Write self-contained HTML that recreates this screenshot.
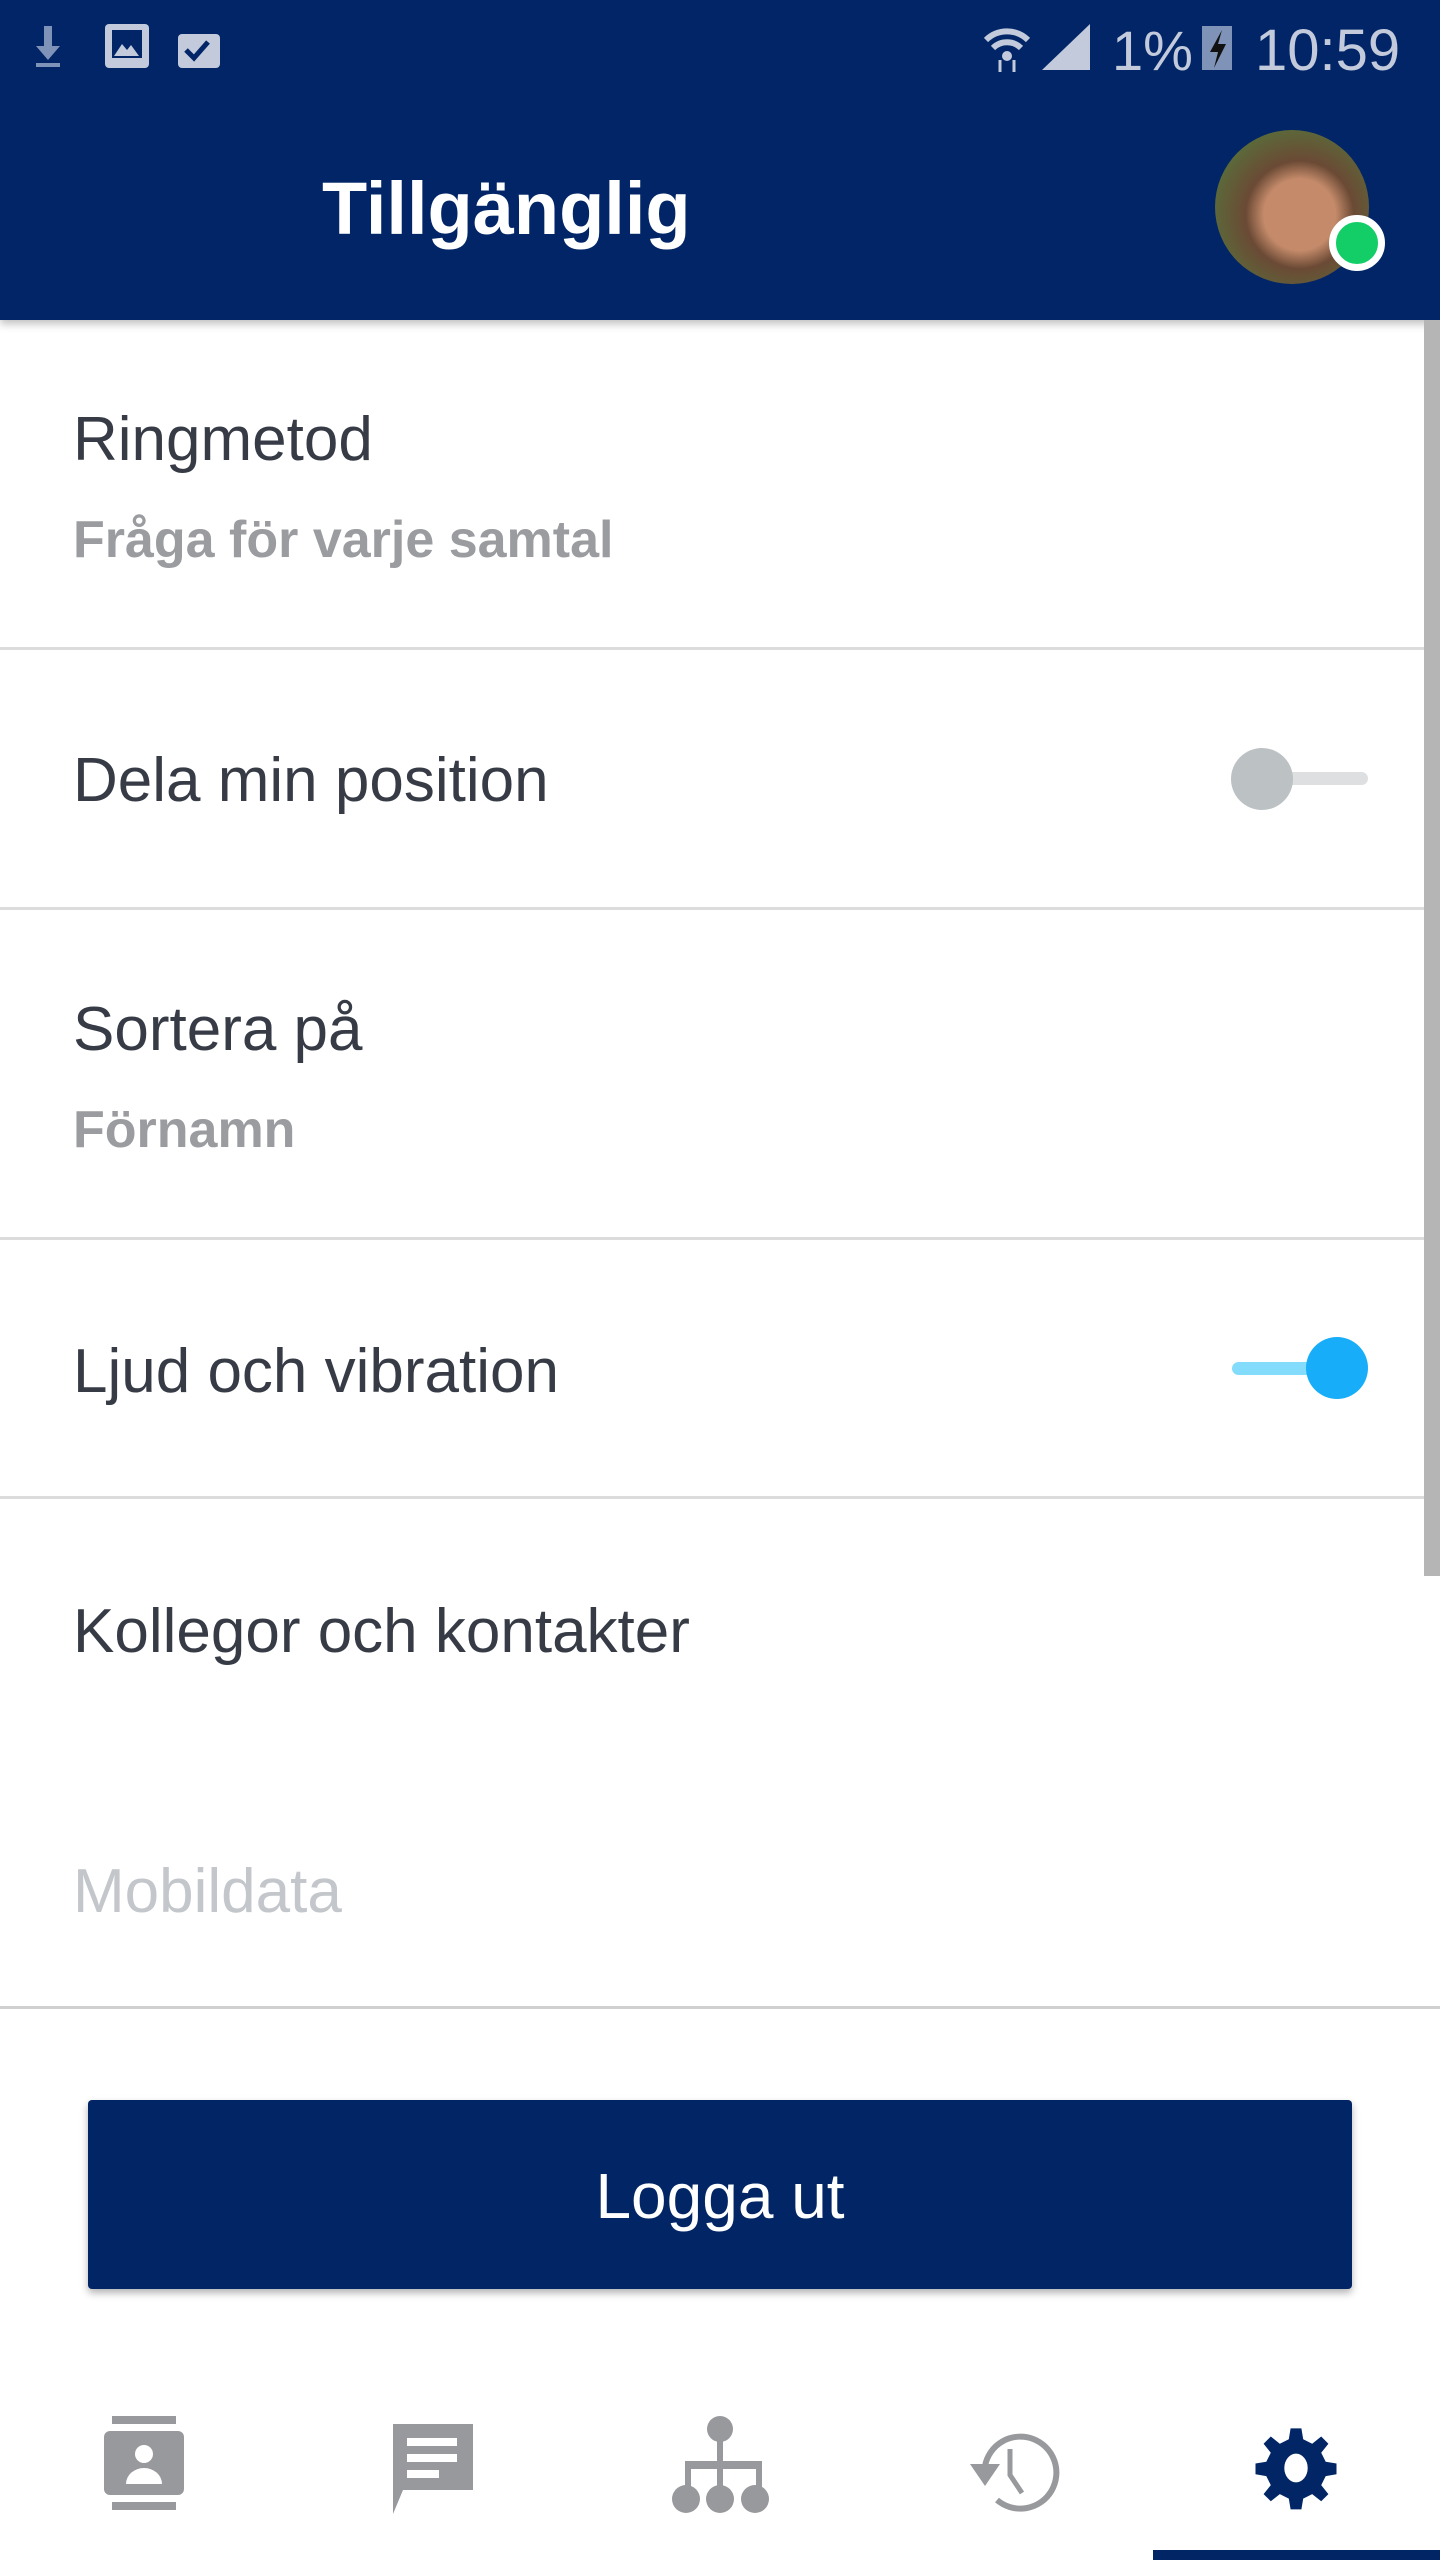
<!DOCTYPE html>
<html><head><meta charset="utf-8"><style>
*{margin:0;padding:0;box-sizing:border-box}
body{width:1440px;height:2560px;position:relative;background:#fff;font-family:"Liberation Sans",sans-serif;overflow:hidden}
.hdr{position:absolute;left:0;top:0;width:1440px;height:320px;background:#012566;box-shadow:0 4px 8px rgba(0,0,0,.25)}
.t{position:absolute;left:73px;font-size:62px;color:#363b45;white-space:nowrap}
.s{position:absolute;left:73px;font-size:52px;font-weight:bold;color:#9a9ca0;white-space:nowrap}
.d{position:absolute;left:0;width:1424px;height:3px;background:#dcdcdc}
</style></head><body>
<div class="hdr">
 <svg width="1440" height="100" style="position:absolute;left:0;top:0" fill="#c2cadc">
  <rect x="44" y="26" width="8" height="22" fill="#7f93b8"/><path d="M36 46h24l-12 14z" fill="#7f93b8"/><rect x="36" y="63" width="24" height="4" fill="#7f93b8"/>
  <rect x="105" y="24" width="44" height="44" rx="4"/><rect x="112" y="30" width="30" height="28" fill="#012566"/><path d="M114 56l8-12 5 6 4-5 8 11z"/>
  <rect x="178" y="34" width="42" height="34" rx="4"/><path d="M186 50l8 8 14-16" stroke="#012566" stroke-width="5" fill="none"/>
  <text x="1112" y="70" font-size="56" fill="#c2cadc" font-family="Liberation Sans">1%</text>
  <rect x="1202" y="26" width="30" height="44" fill="#7f93b8"/><path d="M1222 30l-12 22h8l-4 16 12-24h-8z" fill="#111"/>
  <text x="1255" y="70" font-size="58" fill="#c2cadc" font-family="Liberation Sans">10:59</text>
  <path d="M1042 70l48-46v46z"/>
  <path d="M986 40a30 30 0 0 1 42 0" stroke="#c2cadc" stroke-width="6" fill="none"/><path d="M993 48a20 20 0 0 1 28 0" stroke="#c2cadc" stroke-width="6" fill="none"/><circle cx="1007" cy="56" r="5"/><path d="M1000 60v12M1014 60v12" stroke="#c2cadc" stroke-width="3"/>
 </svg>
 <div style="position:absolute;left:322px;top:166px;font-size:74px;font-weight:bold;color:#fff">Tillgänglig</div>
 <div style="position:absolute;left:1215px;top:130px;width:154px;height:154px;border-radius:50%;background:radial-gradient(circle at 55% 55%,#c48a6a 0 30%,#6b4a35 45%,#5a6b3a 75%,#3a2a20 100%)"></div>
 <div style="position:absolute;left:1329px;top:215px;width:56px;height:56px;border-radius:50%;background:#13ce66;border:7px solid #fff"></div>
</div>
<div style="position:absolute;left:1424px;top:320px;width:16px;height:1256px;background:#b5b5b5"></div>

<div class="t" style="top:404px">Ringmetod</div>
<div class="s" style="top:510px">Fråga för varje samtal</div>
<div class="d" style="top:647px"></div>
<div class="t" style="top:745px">Dela min position</div>
<div style="position:absolute;left:1262px;top:772px;width:106px;height:13px;border-radius:7px;background:#dddfe1"></div>
<div style="position:absolute;left:1231px;top:748px;width:62px;height:62px;border-radius:50%;background:#bcc1c4"></div>
<div class="d" style="top:907px"></div>
<div class="t" style="top:994px">Sortera på</div>
<div class="s" style="top:1100px">Förnamn</div>
<div class="d" style="top:1237px"></div>
<div class="t" style="top:1336px">Ljud och vibration</div>
<div style="position:absolute;left:1232px;top:1362px;width:106px;height:13px;border-radius:7px;background:#84dcfc"></div>
<div style="position:absolute;left:1306px;top:1337px;width:62px;height:62px;border-radius:50%;background:#18adf8"></div>
<div class="d" style="top:1496px"></div>
<div class="t" style="top:1596px">Kollegor och kontakter</div>
<div class="t" style="top:1856px;color:#c3c6ca">Mobildata</div>
<div class="d" style="top:2006px;width:1440px;background:#d0d0d0"></div>

<div style="position:absolute;left:88px;top:2100px;width:1264px;height:189px;background:#012565;border-radius:4px;box-shadow:0 4px 8px rgba(0,0,0,.3);color:#fff;font-size:64px;text-align:center;line-height:192px">Logga ut</div>

<svg width="1440" height="140" style="position:absolute;left:0;top:2404px" fill="#98999d">
 <rect x="112" y="12" width="64" height="8"/><rect x="104" y="27" width="80" height="64" rx="6"/><rect x="112" y="98" width="64" height="8"/>
 <circle cx="144" cy="50" r="9" fill="#fff"/><path d="M126 80a18 16 0 0 1 36 0z" fill="#fff"/>
 <path d="M393 20h80v66h-70l-10 24z"/><rect x="407" y="34" width="50" height="8" fill="#fff"/><rect x="407" y="50" width="50" height="8" fill="#fff"/><rect x="407" y="66" width="32" height="8" fill="#fff"/>
 <circle cx="720" cy="25" r="13"/><rect x="717" y="35" width="6" height="25"/><rect x="685" y="57" width="77" height="8"/><rect x="685" y="57" width="6" height="30"/><rect x="717" y="57" width="6" height="30"/><rect x="756" y="57" width="6" height="30"/>
 <circle cx="686" cy="95" r="14"/><circle cx="720" cy="95" r="14"/><circle cx="755" cy="95" r="14"/>
 <path d="M985 62a36 36 0 1 1 12 34" stroke="#98999d" stroke-width="6" fill="none"/><path d="M970 60h30l-15 22z"/><path d="M1010 45v26l12 18" stroke="#98999d" stroke-width="5" fill="none"/>
 <g fill="#012565" transform="translate(1296 64) scale(0.9)"><path d="M-6 -44h12l2 12 10 5 10 -8 8 8-8 10 5 10 12 2v12l-12 2-5 10 8 10-8 8-10-8-10 5-2 12h-12l-2-12-10-5-10 8-8-8 8-10-5-10-12-2v-12l12-2 5-10-8-10 8-8 10 8 10-5z"/><ellipse cx="0" cy="0" rx="13" ry="16" fill="#fff"/></g>
</svg>
<div style="position:absolute;left:1153px;top:2550px;width:287px;height:10px;background:#012565"></div>
</body></html>
